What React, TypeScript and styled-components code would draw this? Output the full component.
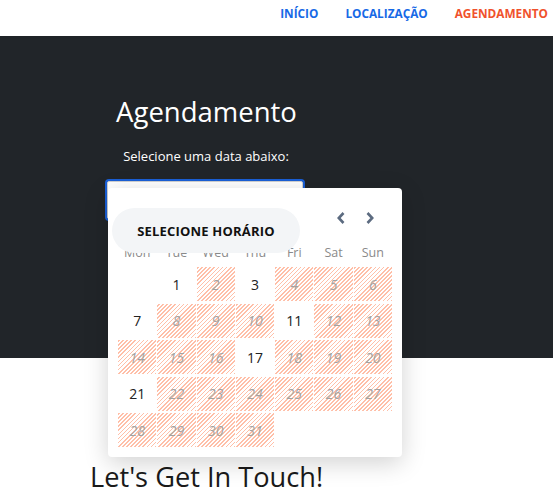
import React from "react";
import styled, { createGlobalStyle } from "styled-components";

const Global = createGlobalStyle`
  html, body { margin: 0; padding: 0; background: #fff; }
  body { font-family: "Open Sans", "Noto Sans", sans-serif; }
  * { box-sizing: border-box; }
`;

const Nav = styled.nav`
  height: 36px;
  display: flex;
  justify-content: flex-end;
  align-items: flex-start;
  gap: 27px;
  padding: 5px 5px 0 0;
  background: #fff;
  box-shadow: 0 1px 2px rgba(0, 0, 0, 0.08);
  position: relative;
  z-index: 1;
`;

const NavLink = styled.a<{ $active?: boolean }>`
  font-size: 11.8px;
  font-weight: 700;
  line-height: 17px;
  color: ${(p) => (p.$active ? "#f0522c" : "#1769e6")};
  text-decoration: none;
  text-transform: uppercase;
`;

const Hero = styled.section`
  background: #212529;
  height: 322px;
  padding-top: 57px;
`;

const Column = styled.div`
  margin-left: 107px;
  width: 196px;
  text-align: center;
  position: relative;
`;

const Title = styled.h1`
  margin: 0;
  font-size: 27.5px;
  font-weight: 400;
  line-height: 38px;
  color: #fff;
  white-space: nowrap;
  padding-left: 3px;
`;

const Subtitle = styled.p`
  margin: 15px 0 0;
  font-size: 13px;
  line-height: 20px;
  color: #fff;
  white-space: nowrap;
  padding-left: 2px;
`;

const DateInput = styled.div`
  margin-top: 15px;
  height: 38px;
  width: 196px;
  background: #fff;
  border: 1px solid #d0d0d0;
  border-radius: 2px;
  box-shadow: 0 0 0 2px #1a5fd6;
`;

const Popup = styled.div`
  position: absolute;
  left: 1px;
  top: 95px;
  width: 294px;
  background: #fff;
  border-radius: 4px;
  box-shadow: 0 6px 24px rgba(0, 0, 0, 0.18);
  padding: 10px;
  text-align: left;
  z-index: 5;
`;

const Header = styled.div`
  height: 40px;
  display: flex;
  justify-content: flex-end;
  align-items: center;
  gap: 5px;
  padding-right: 10px;
  margin-bottom: 6px;
`;

const ArrowButton = styled.button`
  width: 24px;
  height: 24px;
  border: none;
  background: transparent;
  padding: 0;
  display: flex;
  align-items: center;
  justify-content: center;
  cursor: pointer;
`;

const Pill = styled.div`
  position: absolute;
  left: 4px;
  top: 20px;
  width: 188px;
  height: 45px;
  border-radius: 23px;
  background: #f3f5f7;
  display: flex;
  align-items: center;
  justify-content: center;
  font-size: 13px;
  font-weight: 700;
  color: #111;
  letter-spacing: 0.2px;
  z-index: 2;
`;

const Weekdays = styled.div`
  display: grid;
  grid-template-columns: repeat(7, 1fr);
  column-gap: 1px;
  height: 18px;
  margin-bottom: 5px;
`;

const Weekday = styled.div`
  text-align: center;
  font-size: 12.5px;
  line-height: 18px;
  color: #8a8a8a;
`;

const Grid = styled.div`
  display: grid;
  grid-template-columns: repeat(7, 1fr);
  column-gap: 1px;
  row-gap: 2.5px;
`;

const Day = styled.div<{ $disabled?: boolean; $empty?: boolean }>`
  height: 34px;
  display: flex;
  align-items: center;
  justify-content: center;
  font-size: 14px;
  color: ${(p) => (p.$disabled ? "#a3a3a3" : "#222")};
  font-style: ${(p) => (p.$disabled ? "italic" : "normal")};
  background: ${(p) =>
    p.$disabled
      ? "repeating-linear-gradient(-45deg, #ffbfa8 0 1.2px, #fff 1.2px 2.9px)"
      : "transparent"};
`;

const Contact = styled.section`
  padding: 100px 0 0 90px;
`;

const ContactTitle = styled.h2`
  margin: 0;
  font-size: 27.2px;
  font-weight: 400;
  line-height: 38px;
  color: #1a1a1a;
`;

const Chevron = ({ dir }: { dir: "left" | "right" }) => (
  <svg width="10" height="14" viewBox="0 0 10 14">
    <path
      d={dir === "left" ? "M7.5 2 L2.8 7 L7.5 12" : "M2.5 2 L7.2 7 L2.5 12"}
      fill="none"
      stroke="#5c6b80"
      strokeWidth="2.6"
    />
  </svg>
);

const available = new Set([1, 3, 7, 11, 17, 21]);
const weekdays = ["Mon", "Tue", "Wed", "Thu", "Fri", "Sat", "Sun"];

export default function App() {
  const cells: (number | null)[] = [null];
  for (let d = 1; d <= 31; d++) cells.push(d);
  return (
    <>
      <Global />
      <Nav>
        <NavLink>Início</NavLink>
        <NavLink>Localização</NavLink>
        <NavLink $active>Agendamento</NavLink>
      </Nav>
      <Hero>
        <Column>
          <Title>Agendamento</Title>
          <Subtitle>Selecione uma data abaixo:</Subtitle>
          <DateInput />
          <Popup>
            <Pill>SELECIONE HORÁRIO</Pill>
            <Header>
              <ArrowButton aria-label="anterior">
                <Chevron dir="left" />
              </ArrowButton>
              <ArrowButton aria-label="próximo">
                <Chevron dir="right" />
              </ArrowButton>
            </Header>
            <Weekdays>
              {weekdays.map((w) => (
                <Weekday key={w}>{w}</Weekday>
              ))}
            </Weekdays>
            <Grid>
              {cells.map((d, i) =>
                d === null ? (
                  <Day key={i} $empty />
                ) : (
                  <Day key={i} $disabled={!available.has(d)}>
                    {d}
                  </Day>
                )
              )}
            </Grid>
          </Popup>
        </Column>
      </Hero>
      <Contact>
        <ContactTitle>Let's Get In Touch!</ContactTitle>
      </Contact>
    </>
  );
}
